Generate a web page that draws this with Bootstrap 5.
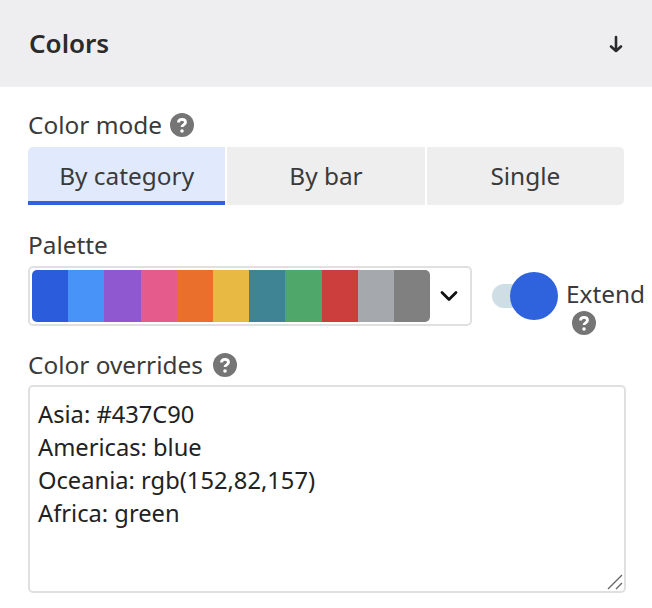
<!DOCTYPE html>
<html lang="en">
<head>
    <meta charset="UTF-8">
    <meta name="viewport" content="width=device-width, initial-scale=1.0">
    <title>Colors</title>
    <link href="https://cdn.jsdelivr.net/npm/bootstrap@5.3.0/dist/css/bootstrap.min.css" rel="stylesheet">
    <style>
        html, body {
            overflow: hidden;
        }
        body {
            font-family: "Noto Sans", "Liberation Sans", sans-serif;
            color: #3a3a3a;
            background: #fff;
            width: 652px;
            height: 608px;
        }
        .panel-head {
            height: 87px;
            padding: 0 29px 0 29px;
            background: #eeeef0;
            color: #2b2b2b;
        }
        .panel-title {
            font-size: 26px;
            font-weight: 600;
            margin: 0;
        }
        .panel-body {
            padding: 22px 26px 0 28px;
        }
        .field-label {
            font-size: 24.4px;
            line-height: 32px;
            margin: 0 0 4px;
            height: 32px;
        }
        .help-dot {
            width: 24px;
            height: 24px;
            flex: none;
            margin-top: 4px;
        }
        .help-wide {
            margin-left: 2px;
        }
        .mode-tabs {
            width: 596px;
            height: 58px;
            gap: 2px;
            margin-top: 6px;
            margin-bottom: 24px;
        }
        .mode-tab {
            flex: 1 1 0;
            border: 0;
            padding: 0;
            background: #eeeeee;
            color: #3a3a3a;
            font-size: 24.4px;
            border-radius: 0;
        }
        .mode-tab:first-child {
            border-radius: 5px 0 0 0;
        }
        .mode-tab:last-child {
            border-radius: 0 5px 5px 0;
        }
        .mode-tab.is-on {
            background: #e1eafc;
            box-shadow: inset 0 -4px 0 #2e63dd;
        }
        .palette-row {
            height: 61px;
            margin-top: 5px;
            margin-bottom: 22px;
        }
        .palette-box {
            flex: none;
            width: 444px;
            height: 60px;
            border: 2px solid #e0e0e0;
            border-radius: 5px;
            padding: 2px;
        }
        .swatches {
            flex: none;
            width: 398px;
            height: 52px;
            border-radius: 5px;
            overflow: hidden;
        }
        .swatches span {
            flex: 1 1 0;
        }
        .chev {
            flex: none;
            width: 20px;
            height: 14px;
            margin-left: 9px;
        }
        .extend-wrap {
            flex: none;
            margin-left: 20px;
        }
        .extend-switch {
            width: 66px;
            height: 48px;
            margin-top: 6px;
        }
        .extend-track {
            left: 0;
            top: 12px;
            width: 40px;
            height: 24px;
            border-radius: 12px;
            background: #cfdde5;
        }
        .extend-knob {
            left: 18px;
            top: 0;
            width: 48px;
            height: 48px;
            border-radius: 50%;
            background: #2e63dd;
        }
        .extend-text {
            font-size: 24.4px;
            line-height: 28px;
            margin: 14px 0 0 8px;
        }
        .help-under {
            margin-left: 6px;
            margin-top: 3px;
        }
        .override-wrap {
            width: 598px;
            height: 208px;
        }
        .override-box.form-control {
            width: 598px;
            height: 208px;
            border: 2px solid #e0e0e0;
            border-radius: 5px;
            padding: 11px 8px;
            font-family: inherit;
            font-size: 23.7px;
            line-height: 33px;
            color: #222;
            box-shadow: none;
            resize: none;
        }
        .grip {
            right: 3px;
            bottom: 3px;
            width: 16px;
            height: 16px;
            pointer-events: none;
        }
    </style>
</head>
<body>

<div class="panel-head d-flex align-items-center justify-content-between">
    <h2 class="panel-title">Colors</h2>
    <svg width="14" height="18" viewBox="0 0 14 18" fill="none" stroke="#2b2b2b" stroke-width="2.6" stroke-linecap="round" stroke-linejoin="round">
        <path d="M7 2v14M2 11.500 7 16l5-4.500"/>
    </svg>
</div>

<div class="panel-body">
    <div class="field-label d-flex align-items-start gap-2">Color mode
        <svg class="help-dot" viewBox="0 0 24 24"><circle cx="12" cy="12" r="12" fill="#757575"/><path d="M8.500 9.500c0-2 1.500-3.200 3.500-3.200s3.500 1.200 3.500 3c0 2.500-3.500 2.500-3.500 4.700" fill="none" stroke="#fff" stroke-width="2.800"/><circle cx="12" cy="18" r="1.800" fill="#fff"/></svg>
    </div>
    <div class="mode-tabs d-flex">
        <button type="button" class="btn mode-tab is-on">By category</button>
        <button type="button" class="btn mode-tab">By bar</button>
        <button type="button" class="btn mode-tab">Single</button>
    </div>

    <div class="field-label">Palette</div>
    <div class="palette-row d-flex align-items-start">
        <div class="palette-box d-flex align-items-center">
            <div class="swatches d-flex">
                <span style="background:#2b5cdc"></span>
                <span style="background:#4893f7"></span>
                <span style="background:#8f58d0"></span>
                <span style="background:#e55c8c"></span>
                <span style="background:#ea6f2d"></span>
                <span style="background:#e9ba43"></span>
                <span style="background:#3e8494"></span>
                <span style="background:#4fa76a"></span>
                <span style="background:#cc3e3e"></span>
                <span style="background:#a5a8ad"></span>
                <span style="background:#808080"></span>
            </div>
            <svg class="chev" viewBox="0 0 20 14" fill="none" stroke="#111" stroke-width="2.800" stroke-linecap="round" stroke-linejoin="round"><path d="M3 3.500l7 7 7-7"/></svg>
        </div>
        <div class="extend-wrap d-flex align-items-start">
            <div class="extend-switch position-relative">
                <div class="extend-track position-absolute"></div>
                <div class="extend-knob position-absolute"></div>
            </div>
            <div class="extend-text">Extend
                <svg class="help-dot help-under d-block" viewBox="0 0 24 24"><circle cx="12" cy="12" r="12" fill="#757575"/><path d="M8.500 9.500c0-2 1.500-3.200 3.500-3.200s3.500 1.200 3.500 3c0 2.500-3.500 2.500-3.500 4.700" fill="none" stroke="#fff" stroke-width="2.800"/><circle cx="12" cy="18" r="1.800" fill="#fff"/></svg>
            </div>
        </div>
    </div>

    <div class="field-label d-flex align-items-start gap-2">Color overrides
        <svg class="help-dot help-wide" viewBox="0 0 24 24"><circle cx="12" cy="12" r="12" fill="#757575"/><path d="M8.500 9.500c0-2 1.500-3.200 3.500-3.200s3.500 1.200 3.500 3c0 2.500-3.500 2.500-3.500 4.700" fill="none" stroke="#fff" stroke-width="2.800"/><circle cx="12" cy="18" r="1.800" fill="#fff"/></svg>
    </div>
    <div class="override-wrap position-relative">
        <textarea class="form-control override-box">Asia: #437C90
Americas: blue
Oceania: rgb(152,82,157)
Africa: green</textarea>
        <svg class="grip position-absolute" viewBox="0 0 16 16" fill="none" stroke="#666" stroke-width="1.400"><path d="M1 15 15 1M9 15l6-6"/></svg>
    </div>
</div>

<script src="https://cdn.jsdelivr.net/npm/bootstrap@5.3.0/dist/js/bootstrap.bundle.min.js"></script>
</body>
</html>
